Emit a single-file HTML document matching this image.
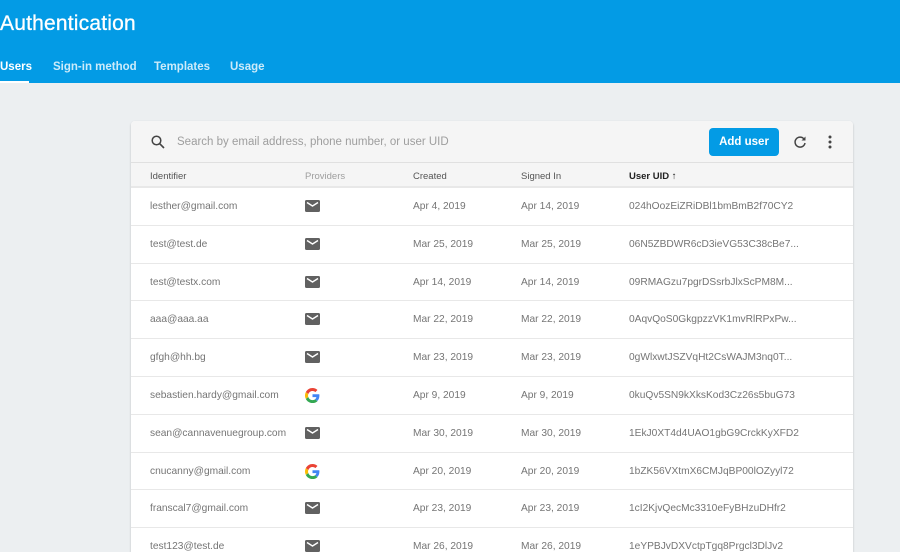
<!DOCTYPE html>
<html style="overflow:hidden;height:552px"><head><style>
*{margin:0;padding:0;box-sizing:border-box}
html,body{width:900px;height:552px;overflow:hidden}
body{background:#eceff1;font-family:"Liberation Sans",Roboto,sans-serif;position:relative}
.hdr{position:absolute;left:0;top:0;width:900px;height:83px;background:#039be5;color:#fff}
.title{position:absolute;left:0;top:12px;font-size:21px;letter-spacing:0.2px;-webkit-text-stroke:0.3px #fff}
.tab{position:absolute;top:61px;font-size:11.5px;font-weight:bold;color:rgba(255,255,255,.8)}
.ul{position:absolute;left:0;top:81px;width:29px;height:2px;background:#fff}
.card{position:absolute;left:131px;top:121px;width:722px;height:431px;background:#fff;border-radius:4px 4px 0 0;box-shadow:0 1px 2px rgba(0,0,0,.2);overflow:hidden}
.tb{height:42px;background:#f5f5f5;border-bottom:1px solid #e0e0e0;position:relative}
.search{position:absolute;left:46px;top:15px;font-size:11.5px;color:#9e9e9e}
.btn{position:absolute;left:578px;top:7px;width:70px;height:28px;background:#039be5;border-radius:4px;color:#fff;font-size:11.5px;font-weight:bold;text-align:center;line-height:28px}
.th{height:25px;background:#f5f5f5;border-bottom:2px solid #e8e8e8;position:relative;font-size:9.5px;color:#555}
.th span,.row span{position:absolute}
.row{height:37.8px;border-bottom:1px solid #e8e8e8;position:relative;font-size:10.2px;color:#757575}
.row span{top:13px}
.c1{left:19px}.c2{left:174px}.c3{left:282px}.c4{left:390px}.c5{left:498px}
.th span{top:8px}
</style></head><body>
<div class="hdr">
<div class="title">Authentication</div>
<div class="tab" style="left:0;color:#fff">Users</div>
<div class="tab" style="left:53px">Sign-in method</div>
<div class="tab" style="left:154px">Templates</div>
<div class="tab" style="left:230px">Usage</div>
<div class="ul"></div>
</div>
<div class="card">
<div class="tb">
<svg style="position:absolute;left:20px;top:14px" width="14" height="14" viewBox="0 0 14 14"><circle cx="5.5" cy="5.5" r="4.3" fill="none" stroke="#444" stroke-width="1.5"/><path d="M8.7 8.7L13 13" stroke="#444" stroke-width="1.6"/></svg>
<div class="search">Search by email address, phone number, or user UID</div>
<div class="btn">Add user</div>
<svg style="position:absolute;left:662px;top:14px" width="14" height="14" viewBox="0 0 14 14"><path d="M11 4A5 5 0 1 0 12 8" fill="none" stroke="#444" stroke-width="1.5"/><path d="M12.5 1.5V5.5H8.5Z" fill="#444"/></svg>
<svg style="position:absolute;left:697px;top:14px" width="4" height="14"><circle cx="2" cy="2" r="1.5" fill="#444"/><circle cx="2" cy="7" r="1.5" fill="#444"/><circle cx="2" cy="12" r="1.5" fill="#444"/></svg>
</div>
<div class="th"><span class="c1">Identifier</span><span class="c2" style="color:#9e9e9e">Providers</span><span class="c3">Created</span><span class="c4">Signed In</span><span class="c5" style="color:#222;font-weight:bold">User UID &#8593;</span></div>
<div id="rows"></div>
</div>
<script>
var d=[["lesther@gmail.com","m","Apr 4, 2019","Apr 14, 2019","024hOozEiZRiDBl1bmBmB2f70CY2"],
["test@test.de","m","Mar 25, 2019","Mar 25, 2019","06N5ZBDWR6cD3ieVG53C38cBe7..."],
["test@testx.com","m","Apr 14, 2019","Apr 14, 2019","09RMAGzu7pgrDSsrbJlxScPM8M..."],
["aaa@aaa.aa","m","Mar 22, 2019","Mar 22, 2019","0AqvQoS0GkgpzzVK1mvRlRPxPw..."],
["gfgh@hh.bg","m","Mar 23, 2019","Mar 23, 2019","0gWlxwtJSZVqHt2CsWAJM3nq0T..."],
["sebastien.hardy@gmail.com","g","Apr 9, 2019","Apr 9, 2019","0kuQv5SN9kXksKod3Cz26s5buG73"],
["sean@cannavenuegroup.com","m","Mar 30, 2019","Mar 30, 2019","1EkJ0XT4d4UAO1gbG9CrckKyXFD2"],
["cnucanny@gmail.com","g","Apr 20, 2019","Apr 20, 2019","1bZK56VXtmX6CMJqBP00lOZyyl72"],
["franscal7@gmail.com","m","Apr 23, 2019","Apr 23, 2019","1cI2KjvQecMc3310eFyBHzuDHfr2"],
["test123@test.de","m","Mar 26, 2019","Mar 26, 2019","1eYPBJvDXVctpTgq8Prgcl3DlJv2"]];
var mail='<svg width="15" height="12" viewBox="0 0 15 12"><rect width="15" height="12" rx="1.5" fill="#616161"/><path d="M2 2.5L7.5 6L13 2.5" fill="none" stroke="#fff" stroke-width="1.4"/></svg>';
var g='<svg width="15" height="15" viewBox="0 0 48 48"><path fill="#EA4335" d="M24 9.5c3.5 0 6.6 1.2 9.1 3.6l6.8-6.8C35.8 2.4 30.3 0 24 0 14.6 0 6.6 5.4 2.7 13.3l7.9 6.1C12.5 13.6 17.8 9.5 24 9.5z"/><path fill="#4285F4" d="M46.1 24.5c0-1.6-.1-3.1-.4-4.5H24v9h12.4c-.5 2.9-2.2 5.3-4.6 7l7.4 5.7c4.3-4 6.9-9.9 6.9-17.2z"/><path fill="#FBBC05" d="M10.5 28.6c-.5-1.4-.8-3-.8-4.6s.3-3.2.8-4.6l-7.9-6.1C1 16.6 0 20.2 0 24s.9 7.4 2.6 10.7l7.9-6.1z"/><path fill="#34A853" d="M24 48c6.5 0 11.9-2.1 15.9-5.8l-7.4-5.7c-2.2 1.5-4.9 2.3-8.5 2.3-6.2 0-11.5-4.2-13.4-9.9l-7.9 6.1C6.6 42.6 14.6 48 24 48z"/></svg>';
var h='';d.forEach(function(r){h+='<div class="row"><span class="c1">'+r[0]+'</span><span class="c2" style="top:'+(r[1]=="m"?12:11)+'px">'+(r[1]=="m"?mail:g)+'</span><span class="c3">'+r[2]+'</span><span class="c4">'+r[3]+'</span><span class="c5">'+r[4]+'</span></div>'});
document.getElementById('rows').innerHTML=h;
</script>
</body></html>
